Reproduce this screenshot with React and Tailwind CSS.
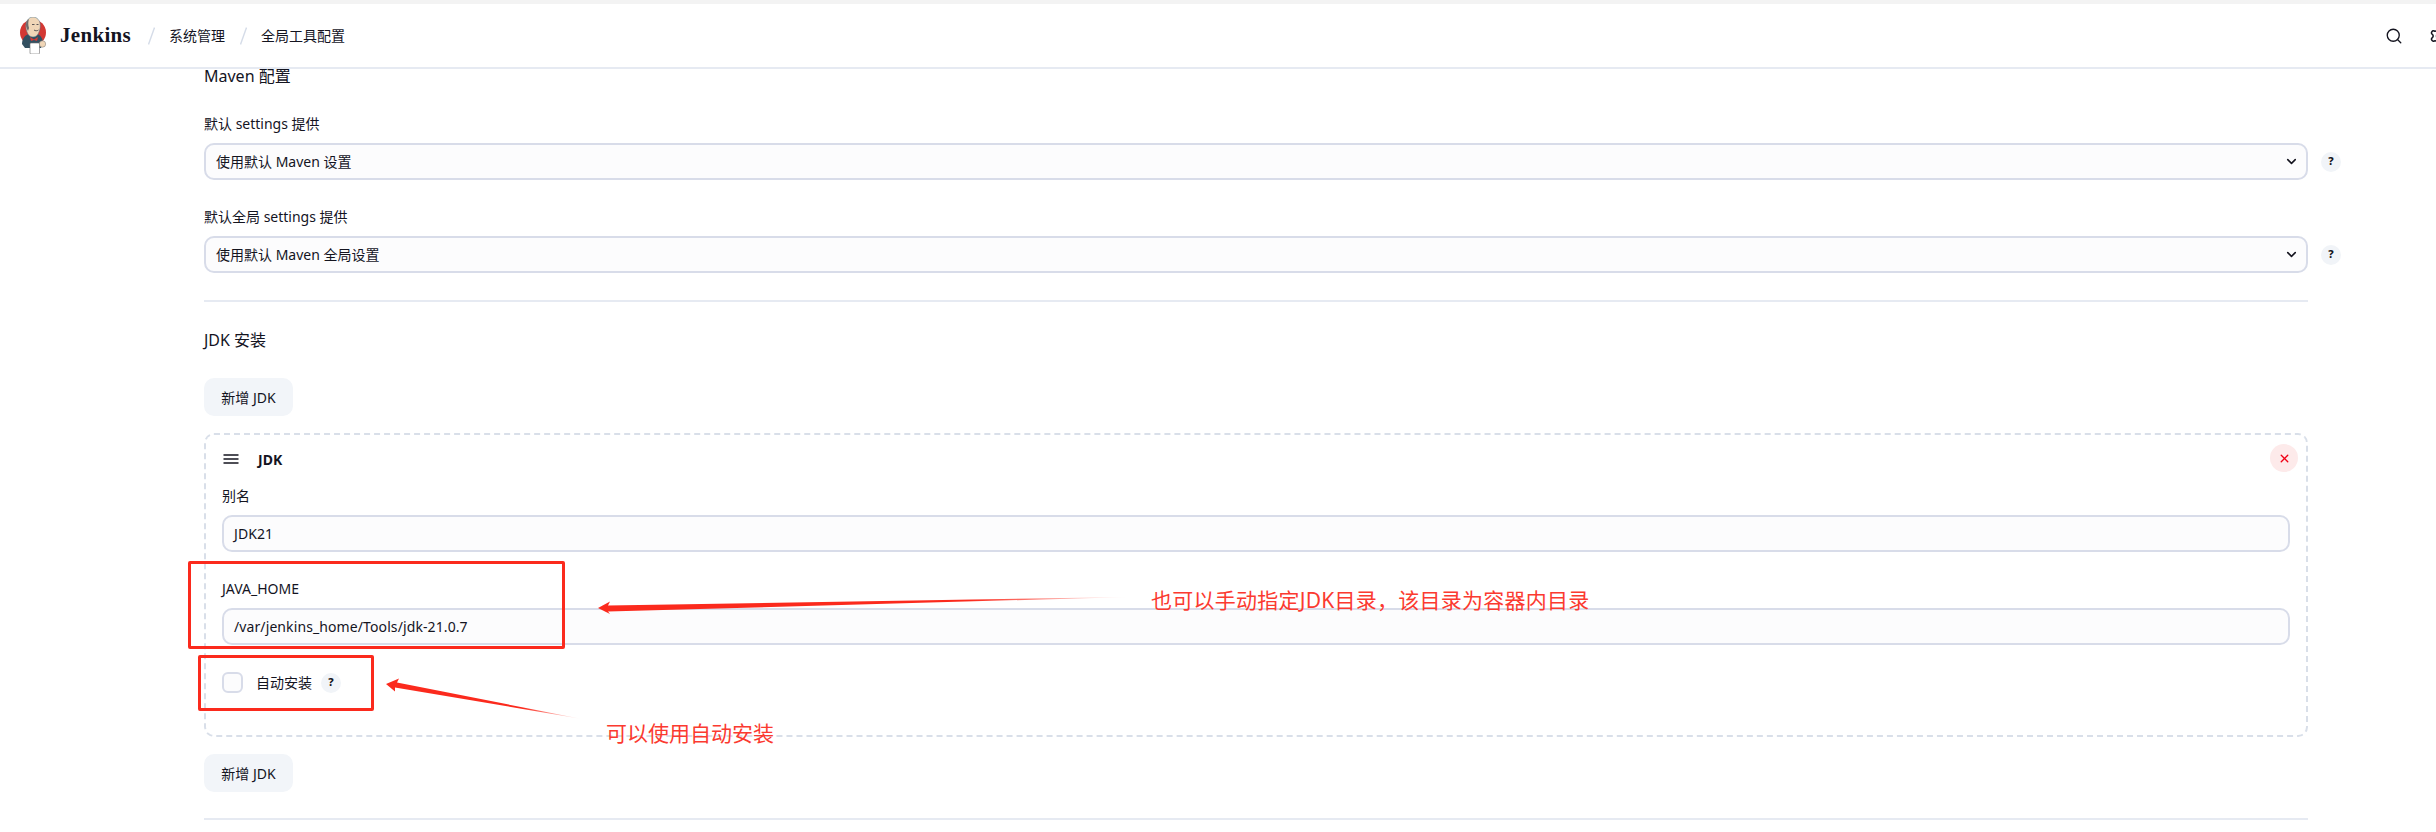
import { Search, ChevronDown, X, Settings } from "lucide-react";

const Help = () => (
  <span className="flex h-5 w-5 shrink-0 items-center justify-center rounded-full bg-[#f1f4f8] text-[11px] font-extrabold text-[#14141f]">
    ?
  </span>
);

const JenkinsLogo = () => (
  <svg width="27" height="37" viewBox="0 0 27 37" className="shrink-0">
    <circle cx="13" cy="15.5" r="13" fill="#d33833" />
    <path d="M2 27c0-6 4-10 8-10h6c4 0 7 4 7 10l-2 4H5z" fill="#335061" />
    <path d="M6 7c1-5 4-7 7-7s6 2 7 6c.5 3 .3 6-1 9-1 3-3 5-6 5s-5-2-6-5C6 12 5.500 9 6 7z" fill="#f0d6b7" stroke="#49728b" strokeWidth="0.5" />
    <path d="M6 8c0-3 1-5 3-6-1 3-1 6 0 9l-1 3c-1-2-2-4-2-6z" fill="#6d6b6d" />
    <path d="M12 7.500h2.500M16.500 7.500h2M14 13c1.500 1 3 1 4.500 0" stroke="#49474a" strokeWidth="0.9" fill="none" />
    <path d="M10 20l4 2.500 4-2.500-1 4-3-1-3 1z" fill="#d33833" />
    <rect x="10" y="26" width="9.500" height="11" rx="1" fill="#fff" stroke="#6d6b6d" strokeWidth="0.6" />
    <circle cx="22.500" cy="27" r="3.200" fill="#f0d6b7" stroke="#777" strokeWidth="0.5" />
  </svg>
);

const Slash = () => (
  <svg width="7" height="18" viewBox="0 0 7 18" className="shrink-0">
    <path d="M6.500 0.500L0.500 17.500" stroke="#d5dce8" strokeWidth="1.4" />
  </svg>
);

const SelectBox = ({ text }) => (
  <div className="flex items-center gap-[13px]">
    <div className="flex h-[37px] w-[2104px] shrink-0 items-center justify-between rounded-[10px] border-2 border-[#d8dce9] bg-[#fcfcfd] pl-[10px] pr-[7px] text-[14px]">
      <span>{text}</span>
      <ChevronDown size={15} strokeWidth={2.5} className="text-[#14141f]" />
    </div>
    <Help />
  </div>
);

const TextField = ({ label, value }) => (
  <div>
    <div className="mb-[9px] h-[20px] text-[14px] leading-[20px]">{label}</div>
    <div className="flex h-[37px] items-center rounded-[10px] border-2 border-[#d8dce9] bg-[#fcfcfd] pl-[10px] text-[14px] tracking-[0.1px]">
      {value}
    </div>
  </div>
);

const AddButton = () => (
  <div className="flex h-[38px] w-[89px] items-center justify-center rounded-[10px] bg-[#f2f5f9] text-[14px]">
    新增 JDK
  </div>
);

export default function App() {
  return (
    <div
      className="relative h-[832px] w-[2436px] overflow-hidden bg-white text-[#14141f]"
      style={{ fontFamily: '"Noto Sans", "Noto Sans CJK SC", sans-serif' }}
    >
      <div className="h-[4px] bg-[#f3f3f3]" />
      <header className="flex h-[65px] items-center border-b-2 border-[#e6eaf2] pl-[20px]">
        <JenkinsLogo />
        <span
          className="ml-[13px] w-[73px] text-[21px] font-bold tracking-[0.3px]"
          style={{ fontFamily: '"Liberation Serif", serif' }}
        >
          Jenkins
        </span>
        <span className="ml-[15px]">
          <Slash />
        </span>
        <span className="ml-[14px] text-[14px]">系统管理</span>
        <span className="ml-[15px]">
          <Slash />
        </span>
        <span className="ml-[14px] text-[14px]">全局工具配置</span>
        <div className="-mr-[13px] ml-auto flex items-center gap-[26px]">
          <Search size={18} strokeWidth={1.8} />
          <Settings size={20} strokeWidth={1.8} />
        </div>
      </header>

      <main className="w-[2308px] pl-[204px]">
        <h3 className="mt-[-5px] h-[24px] text-[16px] leading-[24px]">Maven 配置</h3>
        <div className="mt-[26px] h-[20px] text-[14px] leading-[20px]">默认 settings 提供</div>
        <div className="mt-[9px]">
          <SelectBox text="使用默认 Maven 设置" />
        </div>
        <div className="mt-[27px] h-[20px] text-[14px] leading-[20px]">默认全局 settings 提供</div>
        <div className="mt-[9px]">
          <SelectBox text="使用默认 Maven 全局设置" />
        </div>
        <div className="mt-[27px] h-[2px] bg-[#e6eaf2]" />

        <h3 className="mt-[26px] h-[24px] text-[16px] leading-[24px]">JDK 安装</h3>
        <div className="mt-[26px]">
          <AddButton />
        </div>

        <section className="mt-[17px] h-[304px] rounded-[10px] border-2 border-dashed border-[#d9dfe9] px-[16px] pt-[14px]">
          <div className="flex h-[20px] items-center justify-between">
            <div className="flex items-center">
              <svg width="18" height="12" viewBox="0 0 18 12" stroke="#14141f" strokeWidth="1.6">
                <path d="M1.500 2h15M1.500 6h15M1.500 10h15" />
              </svg>
              <span className="ml-[18px] text-[14px] font-bold">JDK</span>
            </div>
            <span className="-mr-[8px] -mt-[2px] flex h-[28px] w-[28px] items-center justify-center rounded-full bg-[#fdeaea] text-[#f00014]">
              <X size={13} strokeWidth={2.5} />
            </span>
          </div>
          <div className="mt-[17px]">
            <TextField label="别名" value="JDK21" />
          </div>
          <div className="mt-[27px]">
            <TextField label="JAVA_HOME" value="/var/jenkins_home/Tools/jdk-21.0.7" />
          </div>
          <div className="mt-[27px] flex items-center">
            <span className="h-[21px] w-[21px] rounded-[6px] border-2 border-[#d8dce9] bg-[#fcfcfd]" />
            <span className="ml-[13px] text-[14px]">自动安装</span>
            <span className="ml-[9px]">
              <Help />
            </span>
          </div>
        </section>

        <div className="mt-[17px]">
          <AddButton />
        </div>
        <div className="mt-[26px] h-[2px] bg-[#e6eaf2]" />
      </main>

      {/* annotations drawn over the screenshot */}
      <div className="absolute left-[188px] top-[561px] h-[88px] w-[377px] rounded-[2px] border-[3px] border-[#fb2a1d]" />
      <div className="absolute left-[198px] top-[655px] h-[56px] w-[176px] rounded-[2px] border-[3px] border-[#fb2a1d]" />
      <svg className="absolute left-0 top-0" width="2436" height="832">
        <defs>
          <linearGradient id="fade1" gradientUnits="userSpaceOnUse" x1="598" y1="608" x2="1130" y2="597">
            <stop offset="0" stopColor="#fb2a1d" />
            <stop offset="0.7" stopColor="#fb2a1d" />
            <stop offset="1" stopColor="#fb2a1d" stopOpacity="0" />
          </linearGradient>
          <linearGradient id="fade2" gradientUnits="userSpaceOnUse" x1="386" y1="684" x2="582" y2="719">
            <stop offset="0" stopColor="#fb2a1d" />
            <stop offset="0.7" stopColor="#fb2a1d" />
            <stop offset="1" stopColor="#fb2a1d" stopOpacity="0" />
          </linearGradient>
        </defs>
        <path d="M598 608L610 601.500L608 605.500L1130 597L608 611.500L610 614z" fill="url(#fade1)" />
        <path d="M386 684L399 678.500L397 682.500L582 719L395 687.500L395 691.500z" fill="url(#fade2)" />
      </svg>
      <div className="absolute left-[1151px] top-[585px] text-[21px] leading-[30px] tracking-[0.25px] text-[#fb3a30]">
        也可以手动指定JDK目录，该目录为容器内目录
      </div>
      <div className="absolute left-[606px] top-[718px] text-[21px] leading-[30px] text-[#fb3a30]">可以使用自动安装</div>
    </div>
  );
}
